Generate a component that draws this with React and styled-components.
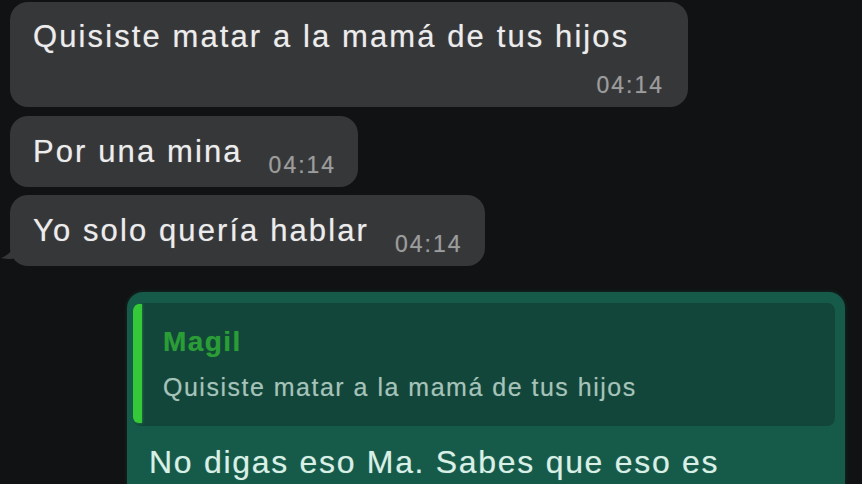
import React from 'react';
import styled, { createGlobalStyle } from 'styled-components';

const Global = createGlobalStyle`
  html, body {
    margin: 0;
    padding: 0;
    background: #111213;
    overflow: hidden;
  }
  body {
    font-family: "Liberation Sans", Arial, sans-serif;
  }
`;

const Screen = styled.div`
  width: 862px;
  height: 484px;
  background: #111213;
  display: flex;
  flex-direction: column;
  padding: 2px 0 0 10px;
  box-sizing: border-box;
  overflow: hidden;
`;

const Incoming = styled.div`
  position: relative;
  align-self: flex-start;
  background: #363738;
  border-radius: 18px;
  color: #ececec;
  margin-bottom: ${p => p.gap || 8}px;
  display: flex;
  flex-direction: ${p => (p.stacked ? 'column' : 'row')};
  align-items: flex-start;
  padding: ${p => (p.stacked ? '17px 24px 9px 23px' : '18px 22px 9px 23px')};
  width: ${p => (p.w ? `${p.w}px` : 'auto')};
  box-sizing: border-box;
`;

const Tail = styled.svg`
  position: absolute;
  left: -9px;
  bottom: 6px;
`;

const Text = styled.span`
  font-size: 31px;
  line-height: 36px;
  letter-spacing: 2.1px;
  white-space: nowrap;
  text-shadow: 0 0 1px rgba(255, 255, 255, 0.45);
`;

const Time = styled.span`
  font-size: 23px;
  line-height: 26px;
  color: #9c9c9c;
  letter-spacing: 2px;
  white-space: nowrap;
  margin-left: ${p => p.ml || 0}px;
  margin-top: ${p => p.mt || 0}px;
  align-self: ${p => (p.end ? 'flex-end' : 'auto')};
  text-shadow: 0 0 1px rgba(200, 200, 200, 0.35);
`;

const Outgoing = styled.div`
  margin: 18px 0 0 117px;
  width: 718px;
  background: #165a49;
  border-radius: 16px 16px 0 0;
  padding: 11px 10px 0 6px;
  box-sizing: border-box;
  flex: 1;
  box-shadow: 0 0 4px rgba(30, 110, 85, 0.35);
`;

const Quote = styled.div`
  background: #12463a;
  border-radius: 8px;
  display: flex;
  height: 123px;
  overflow: hidden;
`;

const Bar = styled.div`
  width: 9px;
  background: #35c93a;
  border-radius: 6px 0 0 6px;
  margin: 1px 0 3px 0;
  box-shadow: 0 0 3px rgba(60, 210, 60, 0.6);
`;

const QuoteBody = styled.div`
  padding: 23px 0 0 21px;
  display: flex;
  flex-direction: column;
`;

const Author = styled.span`
  color: #2b9d36;
  font-size: 28px;
  font-weight: bold;
  line-height: 32px;
  letter-spacing: 1.4px;
  text-shadow: 0 0 1px rgba(50, 170, 60, 0.5);
`;

const QuoteText = styled.span`
  color: #a5c3b9;
  font-size: 25px;
  line-height: 30px;
  margin-top: 14px;
  letter-spacing: 1.5px;
  white-space: nowrap;
  text-shadow: 0 0 1px rgba(165, 195, 185, 0.4);
`;

const Reply = styled.div`
  color: #d8f0e6;
  font-size: 32px;
  line-height: 38px;
  padding: 17px 0 0 16px;
  letter-spacing: 1.7px;
  white-space: nowrap;
  text-shadow: 0 0 1px rgba(216, 240, 230, 0.45);
`;

export default function App() {
  return (
    <>
      <Global />
      <Screen>
        <Incoming stacked w={678} gap={9}>
          <Text>Quisiste matar a la mamá de tus hijos</Text>
          <Time end mt={17}>04:14</Time>
        </Incoming>
        <Incoming>
          <Text>Por una mina</Text>
          <Time ml={26} mt={18}>04:14</Time>
        </Incoming>
        <Incoming>
          <Tail width="16" height="20" viewBox="0 0 16 20">
            <path d="M16 0 C15 8 9 14 0 18 C7 19.5 12 19.5 16 17 Z" fill="#363738" />
          </Tail>
          <Text>Yo solo quería hablar</Text>
          <Time ml={26} mt={18}>04:14</Time>
        </Incoming>
        <Outgoing>
          <Quote>
            <Bar />
            <QuoteBody>
              <Author>Magil</Author>
              <QuoteText>Quisiste matar a la mamá de tus hijos</QuoteText>
            </QuoteBody>
          </Quote>
          <Reply>No digas eso Ma. Sabes que eso es</Reply>
        </Outgoing>
      </Screen>
    </>
  );
}
